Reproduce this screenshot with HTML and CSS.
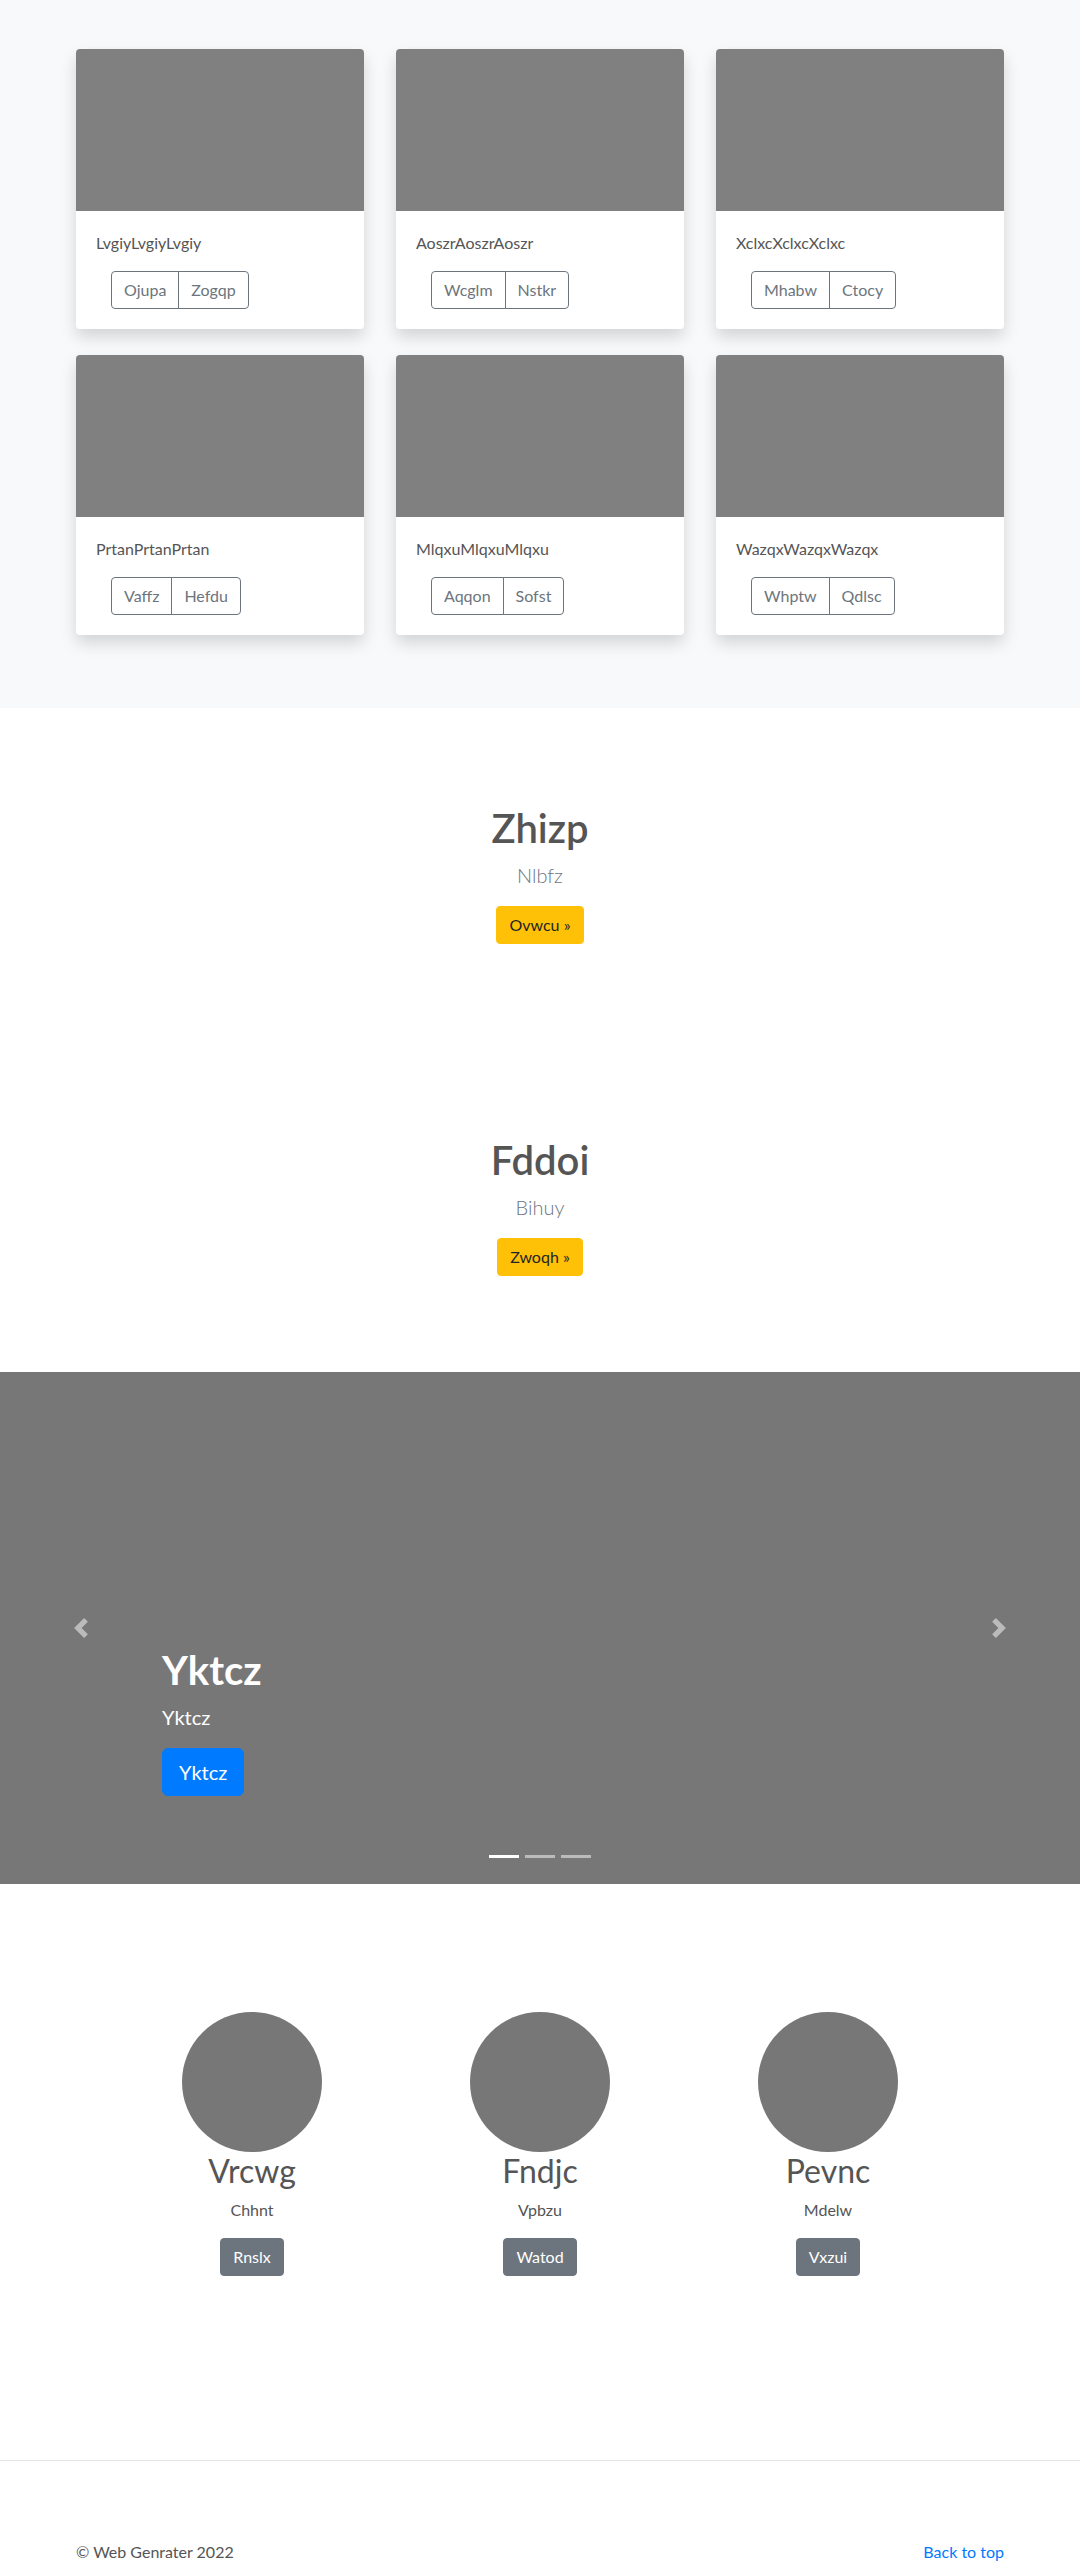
FILE: index.html
```html
<!DOCTYPE html>
<html lang="en">
<head>
<meta charset="utf-8">
<title>Album</title>
<link rel="stylesheet" href="styles.css">
</head>
<body>
<main>
  <section class="album">
    <div class="card-grid">
      <div class="card">
        <div class="card-img"></div>
        <div class="card-body">
          <p class="card-text">LvgiyLvgiyLvgiy</p>
          <div class="btn-group"><button class="btn btn-outline">Ojupa</button><button class="btn btn-outline">Zogqp</button></div>
        </div>
      </div>
      <div class="card">
        <div class="card-img"></div>
        <div class="card-body">
          <p class="card-text">AoszrAoszrAoszr</p>
          <div class="btn-group"><button class="btn btn-outline">Wcglm</button><button class="btn btn-outline">Nstkr</button></div>
        </div>
      </div>
      <div class="card">
        <div class="card-img"></div>
        <div class="card-body">
          <p class="card-text">XclxcXclxcXclxc</p>
          <div class="btn-group"><button class="btn btn-outline">Mhabw</button><button class="btn btn-outline">Ctocy</button></div>
        </div>
      </div>
      <div class="card">
        <div class="card-img"></div>
        <div class="card-body">
          <p class="card-text">PrtanPrtanPrtan</p>
          <div class="btn-group"><button class="btn btn-outline">Vaffz</button><button class="btn btn-outline">Hefdu</button></div>
        </div>
      </div>
      <div class="card">
        <div class="card-img"></div>
        <div class="card-body">
          <p class="card-text">MlqxuMlqxuMlqxu</p>
          <div class="btn-group"><button class="btn btn-outline">Aqqon</button><button class="btn btn-outline">Sofst</button></div>
        </div>
      </div>
      <div class="card">
        <div class="card-img"></div>
        <div class="card-body">
          <p class="card-text">WazqxWazqxWazqx</p>
          <div class="btn-group"><button class="btn btn-outline">Whptw</button><button class="btn btn-outline">Qdlsc</button></div>
        </div>
      </div>
    </div>
  </section>

  <section class="jumbo">
    <h1>Zhizp</h1>
    <p class="lead">Nlbfz</p>
    <div class="actions"><a class="btn btn-warning" href="#">Ovwcu &raquo;</a></div>
  </section>

  <section class="jumbo">
    <h1>Fddoi</h1>
    <p class="lead">Bihuy</p>
    <div class="actions"><a class="btn btn-warning" href="#">Zwoqh &raquo;</a></div>
  </section>

  <section class="carousel">
    <div class="caption">
      <h1>Yktcz</h1>
      <p class="lead">Yktcz</p>
      <div class="actions"><a class="btn btn-lg btn-primary" href="#">Yktcz</a></div>
    </div>
    <a class="ctrl prev" href="#" aria-label="Previous">
      <svg viewBox="0 0 8 8" fill="#fff"><path d="M5.25 0l-4 4 4 4 1.5-1.5-2.5-2.5 2.5-2.5-1.5-1.5z"/></svg>
    </a>
    <a class="ctrl next" href="#" aria-label="Next">
      <svg viewBox="0 0 8 8" fill="#fff"><path d="M2.75 0l-1.5 1.5 2.5 2.5-2.5 2.5 1.5 1.5 4-4-4-4z"/></svg>
    </a>
    <ol class="indicators">
      <li class="active"></li>
      <li></li>
      <li></li>
    </ol>
  </section>

  <section class="marketing">
    <div class="feature">
      <div class="circle"></div>
      <h2>Vrcwg</h2>
      <p>Chhnt</p>
      <div class="actions"><a class="btn btn-secondary" href="#">Rnslx</a></div>
    </div>
    <div class="feature">
      <div class="circle"></div>
      <h2>Fndjc</h2>
      <p>Vpbzu</p>
      <div class="actions"><a class="btn btn-secondary" href="#">Watod</a></div>
    </div>
    <div class="feature">
      <div class="circle"></div>
      <h2>Pevnc</h2>
      <p>Mdelw</p>
      <div class="actions"><a class="btn btn-secondary" href="#">Vxzui</a></div>
    </div>
  </section>
</main>

<footer class="footer">
  <p>&copy; Web Genrater 2022</p>
  <p><a href="#">Back to top</a></p>
</footer>
</body>
</html>
```

FILE: styles.css
```css
* { box-sizing: border-box; }

body {
  margin: 0;
  font-family: Lato, "Open Sans", sans-serif;
  font-size: 16px;
  line-height: 1.5;
  color: #555;
  background: #fff;
}

p { margin: 0 0 16px; }

/* Album */
.album {
  background: #f8f9fa;
  padding: 49px 0 73px;
}
.card-grid {
  width: 928px;
  margin: 0 auto;
  display: grid;
  grid-template-columns: repeat(3, 288px);
  column-gap: 32px;
  row-gap: 26px;
}
.card {
  background: #fff;
  border-radius: 4px;
  overflow: hidden;
  box-shadow: 0 8px 16px rgba(0, 0, 0, 0.15);
}
.card-img {
  height: 162px;
  background: #808080;
}
.card-body {
  padding: 20px;
}
.card-text {
  margin: 0 0 16px;
  color: #555;
}
.btn-group {
  display: inline-flex;
  margin-left: 15px;
}

/* Buttons */
.btn {
  display: inline-block;
  font-family: inherit;
  font-size: 16px;
  font-weight: 400;
  line-height: 24px;
  padding: 6px 12px;
  border: 1px solid transparent;
  border-radius: 4px;
  text-decoration: none;
  background: transparent;
  cursor: pointer;
}
.btn-outline {
  color: #6c757d;
  border-color: #6c757d;
}
.btn-group .btn:first-child { border-radius: 4px 0 0 4px; }
.btn-group .btn + .btn { margin-left: -1px; border-radius: 0 4px 4px 0; }
.btn-warning { background: #ffc107; border-color: #ffc107; color: #212529; }
.btn-primary { background: #007bff; border-color: #007bff; color: #fff; }
.btn-secondary { background: #6c757d; border-color: #6c757d; color: #fff; }
.btn-lg {
  font-size: 20px;
  line-height: 30px;
  padding: 8px 16px;
  border-radius: 6px;
}

.actions {
  display: flex;
  margin: 0 0 16px;
}

/* Jumbotrons */
.jumbo {
  padding: 96px 32px 80px;
  text-align: center;
}
.jumbo h1 {
  margin: 0 0 8px;
  font-size: 40px;
  line-height: 48px;
  font-weight: 600;
  color: #555;
}
.lead {
  font-size: 20px;
  line-height: 30px;
  font-weight: 300;
  color: #6c757d;
  margin: 0 0 16px;
}
.jumbo .actions { justify-content: center; }

/* Carousel */
.carousel {
  position: relative;
  height: 512px;
  background: #777;
  display: flex;
  align-items: flex-end;
  padding: 0 162px 72px;
}
.caption {
  color: #fff;
}
.caption h1 {
  margin: 0 0 8px;
  font-size: 40px;
  line-height: 48px;
  font-weight: 700;
}
.caption .lead {
  color: #fff;
  font-weight: 400;
}
.ctrl {
  position: absolute;
  top: 0;
  bottom: 0;
  width: 162px;
  display: flex;
  align-items: center;
  justify-content: center;
  opacity: 0.5;
}
.ctrl svg { width: 20px; height: 20px; display: block; }
.prev { left: 0; }
.next { right: 0; }
.indicators {
  position: absolute;
  left: 0;
  right: 0;
  bottom: 16px;
  margin: 0;
  padding: 0;
  list-style: none;
  display: flex;
  justify-content: center;
}
.indicators li {
  width: 30px;
  height: 3px;
  margin: 10px 3px;
  background: #fff;
  opacity: 0.5;
}
.indicators li.active { opacity: 1; }

/* Marketing */
.marketing {
  padding-top: 128px;
  margin-bottom: 168px;
  display: grid;
  grid-template-columns: repeat(3, 288px);
  justify-content: center;
  text-align: center;
}
.circle {
  width: 140px;
  height: 140px;
  border-radius: 50%;
  background: #777;
  margin: 0 auto;
}
.feature h2 {
  margin: 0 0 8px;
  font-size: 32px;
  line-height: 38.4px;
  font-weight: 400;
  color: #555;
}
.feature .actions { justify-content: center; }

/* Footer */
.footer {
  border-top: 1px solid #e5e5e5;
  padding: 79px 76px 48px;
  display: flex;
  justify-content: space-between;
}
.footer p { margin: 0 0 16px; }
.footer a { color: #007bff; text-decoration: none; }
```
